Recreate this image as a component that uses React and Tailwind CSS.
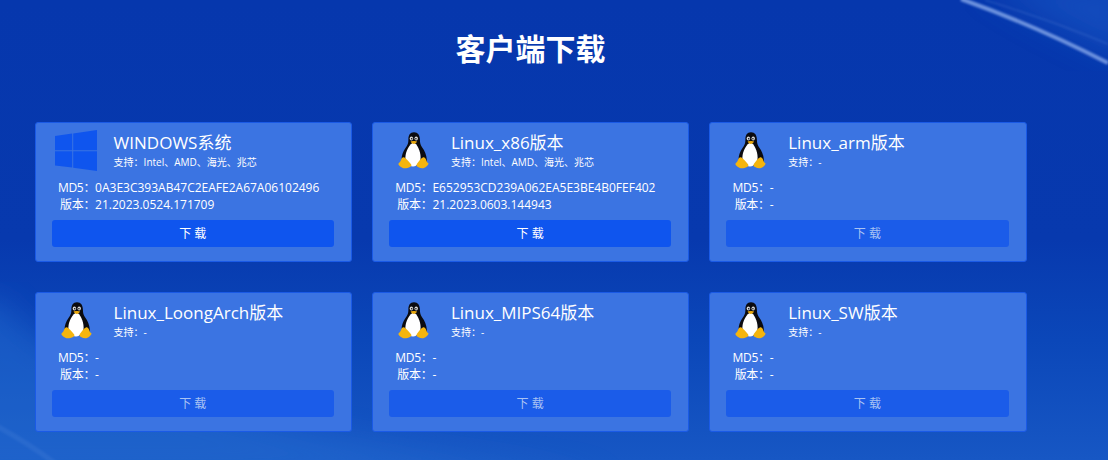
const cards = [
  { name: "WINDOWS系统", os: "win", support: "Intel、AMD、海光、兆芯", md5: "0A3E3C393AB47C2EAFE2A67A06102496", version: "21.2023.0524.171709", ready: true },
  { name: "Linux_x86版本", os: "linux", support: "Intel、AMD、海光、兆芯", md5: "E652953CD239A062EA5E3BE4B0FEF402", version: "21.2023.0603.144943", ready: true },
  { name: "Linux_arm版本", os: "linux", support: "-", md5: "-", version: "-" },
  { name: "Linux_LoongArch版本", os: "linux", support: "-", md5: "-", version: "-" },
  { name: "Linux_MIPS64版本", os: "linux", support: "-", md5: "-", version: "-" },
  { name: "Linux_SW版本", os: "linux", support: "-", md5: "-", version: "-" },
];

function WindowsLogo() {
  return (
    <svg width="42" height="41" viewBox="0 0 42 41" className="ml-[3px] block">
      <path fill="#0f55ee" d="M0 6 L17.2 3.5 V20.2 H0 Z M18.2 3.4 L42 0 V20.2 H18.2 Z M0 21.2 H17.2 V37.5 L0 35.6 Z M18.2 21.2 H42 V41 L18.2 37.7 Z" />
    </svg>
  );
}

function Penguin() {
  return (
    <svg width="32" height="37" viewBox="0 0 32 37" className="ml-[9px] mt-[2px] block">
      <path fill="#0b0b10" d="M16 0.3 C12 0.3 10.3 3.5 10.4 7.5 C10.5 11 9.6 13 7.5 16 C5 19.5 3.4 23.5 3.6 28 C3.8 31 5 33 7 34 L25 34 C27.5 33 28.9 30.5 28.8 27.5 C28.6 23 26.6 18.5 24.2 15.5 C22.6 13.4 21.9 11 21.9 7.5 C21.9 3.5 20 0.3 16 0.3 Z" />
      <path fill="#ffffff" d="M15.5 10.5 C12 11.5 7.4 19 7.4 25.5 C7.4 31 10.5 34.5 15 34.5 C19.5 34.5 22.6 31 22.6 25.5 C22.6 19 19 11.5 15.5 10.5 Z" />
      <ellipse cx="13.4" cy="6.4" rx="1.7" ry="2" fill="#d9d9d9" />
      <ellipse cx="18.2" cy="6.4" rx="1.7" ry="2" fill="#d9d9d9" />
      <circle cx="13.7" cy="6.7" r="0.8" fill="#111" />
      <circle cx="17.9" cy="6.7" r="0.8" fill="#111" />
      <path fill="#e9a80d" d="M12.6 9.6 C14 8.8 17.6 8.8 19 9.6 C18.4 11 17 12 15.8 12 C14.6 12 13.2 11 12.6 9.6 Z" />
      <path fill="#f5b50e" d="M0.3 32 C1 30.5 2.5 30 3 28 C3.4 26 5 24.8 6.4 25.4 C8.4 26.4 11.2 30 13.2 32.4 C13.8 33.4 13.2 34.4 12 35 C10 36 7.5 36.7 5.5 36.2 C3.5 35.4 0.6 33.8 0.3 32 Z" />
      <path fill="#f5b50e" d="M30.6 31.6 C29.4 30.6 28.4 29.6 28 27.6 C27.6 26 26.2 24.8 24.8 25.4 C22.8 26.4 20.4 29.6 18.8 32 C18.2 33.2 18.8 34.4 20 35 C22 36 24 36.6 26 36 C28 35.2 30.4 33.4 30.6 31.6 Z" />
    </svg>
  );
}

function Card({ card }) {
  return (
    <div className="h-[140px] rounded-[3px] border border-[#1a5ae6] bg-[#3b74e2] pl-[16px] pr-[17px] pt-[7px]">
      <div className="flex h-[43px]">
        <div className="w-[62px]">
          {card.os === "win" ? <WindowsLogo /> : <Penguin />}
        </div>
        <div className="pt-[1px]">
          <div className="text-[17px] leading-[24px] text-white">{card.name}</div>
          <div className="text-[10px] leading-[14px] text-white">支持：{card.support}</div>
        </div>
      </div>
      <div className="mt-[6px] text-[12px] leading-[17px] text-white">
        <div className="flex">
          <span className="w-[43.5px] text-right tracking-[-0.3px]">MD5：</span>
          <span>{card.md5}</span>
        </div>
        <div className="flex">
          <span className="w-[43.5px] text-right tracking-[-0.3px]">版本：</span>
          <span>{card.version}</span>
        </div>
      </div>
      <button
        className={
          card.ready
            ? "mt-[7px] block h-[27px] w-full rounded-[3px] bg-[#0f55ee] text-[12px] text-white"
            : "mt-[7px] block h-[27px] w-full rounded-[3px] bg-[#1b5ce9] text-[12px] text-[#a9c2f3]"
        }
      >
        下 载
      </button>
    </div>
  );
}

export default function App() {
  return (
    <div
      className="relative h-[460px] w-[1108px] overflow-hidden bg-[linear-gradient(180deg,#0637ad_0%,#0739ae_52%,#0b47b9_74%,#1757c4_100%)] pl-[34.6px] pt-[27px]"
      style={{ fontFamily: '"Open Sans", "Noto Sans CJK SC", sans-serif' }}
    >
      {/* streak in the top right corner and the soft bands at the bottom */}
      <svg className="absolute left-0 top-0" width="1108" height="460" viewBox="0 0 1108 460" fill="none">
        <defs>
          <filter id="soft"><feGaussianBlur stdDeviation="1.2" /></filter>
          <filter id="softer"><feGaussianBlur stdDeviation="16" /></filter>
        </defs>
        <path d="M-40 300 L0 300 C60 390 300 440 620 480 L-40 480 Z" fill="#2a75d6" opacity="0.4" filter="url(#softer)" />
        <path d="M980 -20 L1130 -20 L1130 62 C1080 36 1040 20 980 -20 Z" fill="#1a5cc9" opacity="0.55" filter="url(#softer)" />
        <path d="M961 -1 C1000 13 1050 33 1108 63" stroke="#86a8ea" strokeWidth="4" opacity="0.8" filter="url(#soft)" />
        <path d="M985 0 C1030 14 1070 28 1108 44" stroke="#6f97e0" strokeWidth="1.5" opacity="0.22" filter="url(#soft)" />
        <path d="M-5 425 C15 436 35 448 56 464" stroke="#5f92e0" strokeWidth="5" opacity="0.18" filter="url(#soft)" />
      </svg>

      <div className="relative w-[992px]">
        <h1 className="text-center text-[30px] font-bold leading-[44px] text-white">客户端下载</h1>
        <div className="mt-[51px] grid grid-cols-3 gap-x-[20px] gap-y-[30px]">
          {cards.map((card) => (
            <Card key={card.name} card={card} />
          ))}
        </div>
      </div>
    </div>
  );
}
